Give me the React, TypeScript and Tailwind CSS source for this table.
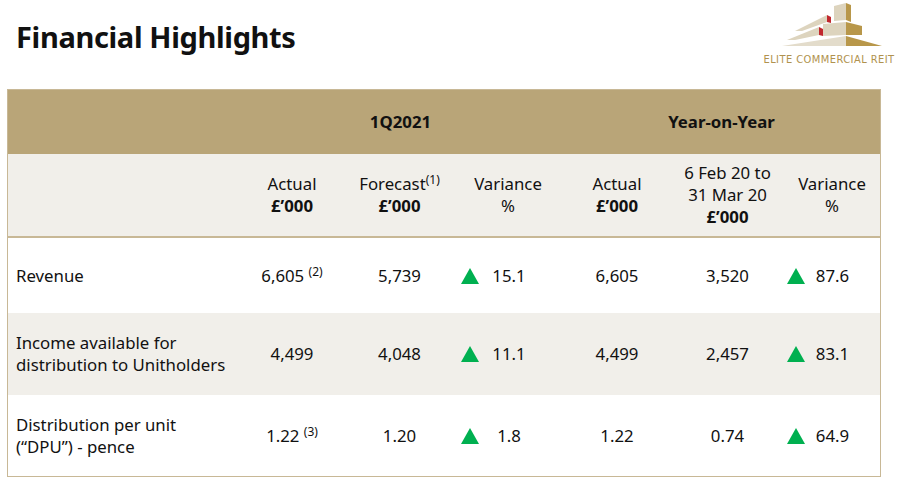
import React from "react";

const font = { fontFamily: '"Noto Sans", "Open Sans", sans-serif' };

function Up() {
  return (
    <svg width="18" height="16" viewBox="0 0 18 16" className="shrink-0">
      <polygon points="9,0 18,16 0,16" fill="#00b050" />
    </svg>
  );
}

function Logo() {
  return (
    <div className="flex w-[128px] flex-col items-center">
      <svg width="102" height="46" viewBox="780 0 102 46" className="ml-[6px]">
        <polygon points="833,4 845,1 845,18 833,19" fill="#ddd4be" />
        <polygon points="845,1 850,3 850,20 845,18" fill="#b8974a" />
        <polygon points="794,29 826,13 826,20 801,29" fill="#ddd4be" />
        <polygon points="826,13 830,15 830,21 826,20" fill="#c1272d" />
        <polygon points="786,38 818,25 818,33 794,38" fill="#ddd4be" />
        <polygon points="818,25 822,27 822,34 818,33" fill="#c1272d" />
        <polygon points="822,22 845,20 845,33 822,34" fill="#ddd4be" />
        <polygon points="845,20 861,24 861,33 845,33" fill="#b8974a" />
        <polygon points="781,44 845,34 845,44" fill="#e3dccb" />
        <polygon points="845,34 881,44 845,44" fill="#b8974a" />
      </svg>
      <div
        className="mt-[6px] whitespace-nowrap text-[11px] leading-none tracking-[0.04em] text-[#b0924e]"
        style={{ fontFamily: '"Liberation Sans Narrow", "DejaVu Sans Condensed", sans-serif' }}
      >
        ELITE COMMERCIAL REIT
      </div>
    </div>
  );
}

function Sup({ children }: { children: React.ReactNode }) {
  return <sup className="relative -top-[6px] text-[12px]">{children}</sup>;
}

function Var({ v, pl, pr }: { v: string; pl: string; pr: string }) {
  return (
    <div className={`flex items-center ${pl}`}>
      <Up />
      <span className={`flex-1 text-center ${pr}`}>{v}</span>
    </div>
  );
}

const cols = "grid grid-cols-[230px_108px_107px_110px_108px_113px_96px]";

const rows = [
  {
    label: <>Revenue</>,
    h: "h-[75px]",
    bg: "bg-white",
    a: <>6,605 <Sup>(2)</Sup></>,
    f: "5,739",
    v: "15.1",
    a2: "6,605",
    p: "3,520",
    v2: "87.6",
  },
  {
    label: <>Income available for<br />distribution to Unitholders</>,
    h: "h-[82px]",
    bg: "bg-[#f1efea]",
    a: <>4,499</>,
    f: "4,048",
    v: "11.1",
    a2: "4,499",
    p: "2,457",
    v2: "83.1",
  },
  {
    label: <>Distribution per unit<br />(“DPU”) - pence</>,
    h: "h-[81px]",
    bg: "bg-white",
    a: <>1.22 <Sup>(3)</Sup></>,
    f: "1.20",
    v: "1.8",
    a2: "1.22",
    p: "0.74",
    v2: "64.9",
  },
];

export default function App() {
  return (
    <div className="relative h-[483px] w-[900px] overflow-hidden bg-white text-[#111]" style={font}>
      <div className="flex h-[65px] items-start justify-between pl-[16px] pr-[7px] pt-[2px]">
        <h1 className="mt-[20px] text-[29px] font-bold leading-none tracking-[-0.012em]">Financial Highlights</h1>
        <Logo />
      </div>

      <div className="ml-[7px] mt-[24px] w-[874px] border border-[#c8b896] text-[16.8px] leading-[22px]">
        <div className={`${cols} h-[64px] items-center bg-[#b9a578] font-bold`}>
          <div />
          <div className="col-span-3 text-center">1Q2021</div>
          <div className="col-span-3 text-center">Year-on-Year</div>
        </div>
        <div className={`${cols} h-[84px] items-center border-b-2 border-[#c8b896] bg-[#f1efea] text-center`}>
          <div />
          <div>Actual<br /><b>£’000</b></div>
          <div>Forecast<Sup>(1)</Sup><br /><b>£’000</b></div>
          <div>Variance<br />%</div>
          <div>Actual<br /><b>£’000</b></div>
          <div>6 Feb 20 to<br />31 Mar 20<br /><b>£’000</b></div>
          <div>Variance<br />%</div>
        </div>
        {rows.map((r, i) => (
          <div key={i} className={`${cols} ${r.h} ${r.bg} items-center`}>
            <div className="pl-[8px]">{r.label}</div>
            <div className="text-center">{r.a}</div>
            <div className="text-center">{r.f}</div>
            <Var v={r.v} pl="pl-[8px]" pr="pr-[24px]" />
            <div className="text-center">{r.a2}</div>
            <div className="text-center">{r.p}</div>
            <Var v={r.v2} pl="pl-[3px]" pr="pr-[20px]" />
          </div>
        ))}
      </div>
    </div>
  );
}
